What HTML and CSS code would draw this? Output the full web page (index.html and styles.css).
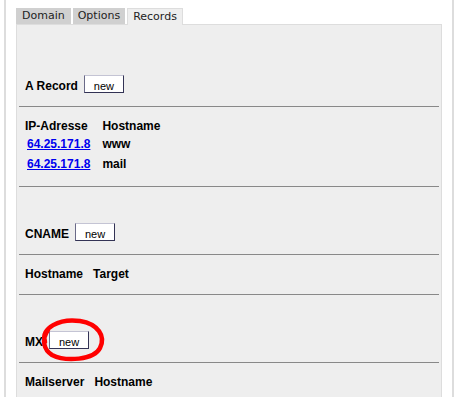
FILE: index.html
```html
<!DOCTYPE html>
<html lang="de">
<head>
    <meta charset="UTF-8">
    <title>DNS Records</title>
    <link rel="stylesheet" href="styles.css">
</head>
<body>

<div class="frame">
    <!-- Tabs -->
    <div class="tabs">
        <span class="tab">Domain</span>
        <span class="tab">Options</span>
        <span class="tab active">Records</span>
    </div>

    <div class="panel">
        <!-- A Record -->
        <div class="rec-head first">
            <div class="rec-row">
                <span class="rec-label">A Record</span>
                <button class="btn-new">new</button>
            </div>
        </div>
        <hr class="rule">
        <table class="rec-table">
            <tr class="th">
                <td>IP-Adresse</td>
                <td>Hostname</td>
            </tr>
            <tr class="row">
                <td><a class="ip" href="#">64.25.171.8</a></td>
                <td>www</td>
            </tr>
            <tr class="row">
                <td><a class="ip" href="#">64.25.171.8</a></td>
                <td>mail</td>
            </tr>
        </table>
        <hr class="rule">

        <!-- CNAME -->
        <div class="rec-head">
            <div class="rec-row">
                <span class="rec-label">CNAME</span>
                <button class="btn-new">new</button>
            </div>
        </div>
        <hr class="rule">
        <table class="rec-table">
            <tr class="th">
                <td>Hostname</td>
                <td>Target</td>
            </tr>
        </table>
        <hr class="rule">

        <!-- MX -->
        <div class="rec-head">
            <div class="rec-row">
                <span class="rec-label">MX</span>
                <button class="btn-new">new</button>
                <svg class="mark" width="72" height="50" viewBox="0 0 72 50">
                    <path d="M 9 27 C 4 13, 24 3, 44 6 C 62 9, 70 21, 64 33 C 58 45, 30 47, 16 40 C 8 35, 5 25, 12 15"
                          fill="none" stroke="#ff0000" stroke-width="4.5" stroke-linecap="round"/>
                </svg>
            </div>
        </div>
        <hr class="rule">
        <table class="rec-table">
            <tr class="th">
                <td>Mailserver</td>
                <td>Hostname</td>
            </tr>
        </table>
        <hr class="rule">
    </div>
</div>

</body>
</html>
```

FILE: styles.css
```css
html, body {
    margin: 0;
    padding: 0;
    background-color: #fff;
}
body {
    font-family: "Liberation Sans", Arial, sans-serif;
    font-size: 12px;
    color: #000;
}
.frame {
    margin-left: 4px;
    width: 426px;
    min-height: 420px;
    padding: 8px 10px 0;
    border-left: 2px solid #dddddd;
    border-right: 2px solid #dddddd;
}
.tabs {
    display: flex;
    gap: 2px;
    height: 16px;
    align-items: flex-start;
}
.tab {
    font-family: "DejaVu Sans", Verdana, sans-serif;
    font-size: 11px;
    line-height: 16px;
    height: 16px;
    padding: 0 5px;
    background-color: #d0d0d0;
    color: #222;
}
.tab:first-child {
    padding: 0 6px;
}
.tab.active {
    box-sizing: border-box;
    height: 17px;
    line-height: 15px;
    background-color: #eeeeee;
    border: 1px solid #dddddd;
    border-bottom: none;
    position: relative;
    z-index: 1;
}
.panel {
    background-color: #eeeeee;
    border: 1px solid #dddddd;
    padding: 0 2px 20px;
}
.rec-head {
    padding: 36px 6px 0;
}
.rec-head.first {
    padding-top: 50px;
}
.rec-row {
    display: flex;
    align-items: baseline;
    gap: 6px;
    position: relative;
}
.rec-label {
    font-weight: bold;
}
.btn-new {
    box-sizing: border-box;
    width: 40px;
    height: 18px;
    padding: 3px 0 0;
    font-family: "Liberation Sans", Arial, sans-serif;
    font-size: 11px;
    background-color: #fff;
    color: #000;
    border: 1px solid;
    border-color: #c4c4d4 #333355 #333355 #6a6a88;
}
.rec-row .mark {
    position: absolute;
    left: 11px;
    top: -16px;
}
.rule {
    border: 0;
    border-top: 1px solid #888888;
    height: 0;
    margin: 13px 0 11px;
}
.rec-table + .rule {
    margin-top: 12px;
    margin-bottom: 0;
}
.rec-table {
    border-collapse: collapse;
    margin-left: 6px;
    font-weight: bold;
}
.rec-table td {
    padding: 0 10px 0 0;
    vertical-align: baseline;
}
.rec-table .th {
    line-height: 16px;
}
.rec-table .row {
    line-height: 20px;
}
.ip {
    display: inline-block;
    margin-right: 2px;
    padding-left: 2px;
    font-size: 12px;
    color: #0000ee;
    text-decoration: underline;
}
```
